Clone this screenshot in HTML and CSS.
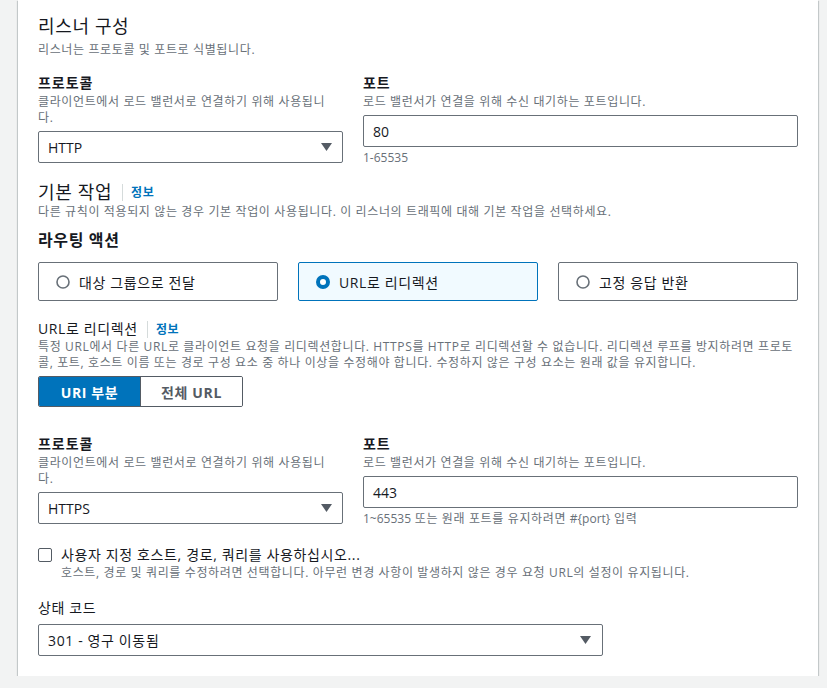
FILE: index.html
```html
<!DOCTYPE html>
<html lang="ko">
<head>
<meta charset="utf-8">
<title>리스너 구성</title>
<link rel="stylesheet" href="styles.css">
</head>
<body>
<div class="card">
  <h2 class="title">리스너 구성</h2>
  <p class="sub">리스너는 프로토콜 및 포트로 식별됩니다.</p>

  <div class="grid2 g1">
    <div class="field">
      <div class="label">프로토콜</div>
      <div class="desc">클라이언트에서 로드 밸런서로 연결하기 위해 사용됩니<br>다.</div>
      <div class="select">
        <span class="lt">HTTP</span>
        <svg class="caret" width="11" height="8" viewBox="0 0 11 8"><polygon points="0,0 11,0 5.5,8" fill="#545b64"/></svg>
      </div>
    </div>
    <div class="field">
      <div class="label">포트</div>
      <div class="desc">로드 밸런서가 연결을 위해 수신 대기하는 포트입니다.</div>
      <div class="input">80</div>
      <div class="hint"><span class="lt">1-65535</span></div>
    </div>
  </div>

  <div class="head-row">
    <h2 class="title">기본 작업</h2>
    <span class="info">정보</span>
  </div>
  <p class="sub tight">다른 규칙이 적용되지 않는 경우 기본 작업이 사용됩니다. 이 리스너의 트래픽에 대해 기본 작업을 선택하세요.</p>

  <h3 class="subhead">라우팅 액션</h3>
  <div class="tiles">
    <div class="tile">
      <svg class="radio" width="14" height="14" viewBox="0 0 14 14"><circle cx="7" cy="7" r="6" fill="#fff" stroke="#687078" stroke-width="1.6"/></svg>
      <span>대상 그룹으로 전달</span>
    </div>
    <div class="tile selected">
      <svg class="radio" width="14" height="14" viewBox="0 0 14 14"><circle cx="7" cy="7" r="5" fill="#fff" stroke="#0073bb" stroke-width="4"/></svg>
      <span>URL로 리디렉션</span>
    </div>
    <div class="tile">
      <svg class="radio" width="14" height="14" viewBox="0 0 14 14"><circle cx="7" cy="7" r="6" fill="#fff" stroke="#687078" stroke-width="1.6"/></svg>
      <span>고정 응답 반환</span>
    </div>
  </div>

  <div class="label-row">
    <span class="label plain">URL로 리디렉션</span>
    <span class="info">정보</span>
  </div>
  <div class="desc">특정 URL에서 다른 URL로 클라이언트 요청을 리디렉션합니다. HTTPS를 HTTP로 리디렉션할 수 없습니다. 리디렉션 루프를 방지하려면 프로토<br>콜, 포트, 호스트 이름 또는 경로 구성 요소 중 하나 이상을 수정해야 합니다. 수정하지 않은 구성 요소는 원래 값을 유지합니다.</div>
  <div class="segmented">
    <span class="seg active">URI 부분</span>
    <span class="seg">전체 URL</span>
  </div>

  <div class="grid2 g2">
    <div class="field">
      <div class="label">프로토콜</div>
      <div class="desc">클라이언트에서 로드 밸런서로 연결하기 위해 사용됩니<br>다.</div>
      <div class="select">
        <span class="lt">HTTPS</span>
        <svg class="caret" width="11" height="8" viewBox="0 0 11 8"><polygon points="0,0 11,0 5.5,8" fill="#545b64"/></svg>
      </div>
    </div>
    <div class="field">
      <div class="label">포트</div>
      <div class="desc">로드 밸런서가 연결을 위해 수신 대기하는 포트입니다.</div>
      <div class="input">443</div>
      <div class="hint"><span class="lt">1~65535</span> 또는 원래 포트를 유지하려면 <span class="lt">#{port}</span> 입력</div>
    </div>
  </div>

  <div class="check-row">
    <span class="checkbox"></span>
    <div>
      <div class="check-label">사용자 지정 호스트, 경로, 쿼리를 사용하십시오...</div>
      <div class="desc">호스트, 경로 및 쿼리를 수정하려면 선택합니다. 아무런 변경 사항이 발생하지 않은 경우 요청 URL의 설정이 유지됩니다.</div>
    </div>
  </div>

  <div class="field status">
    <div class="label plain">상태 코드</div>
    <div class="select wide">
      <span>301 - 영구 이동됨</span>
      <svg class="caret" width="11" height="8" viewBox="0 0 11 8"><polygon points="0,0 11,0 5.5,8" fill="#545b64"/></svg>
    </div>
  </div>
</div>
</body>
</html>
```

FILE: styles.css
```css
html, body {
  margin: 0;
  padding: 0;
  background: #f2f3f3;
  overflow: hidden;
}
body {
  font-family: "Open Sans", "Noto Sans CJK KR", sans-serif;
  letter-spacing: 0.045em;
  color: #16191f;
  font-size: 14px;
}
.lt { letter-spacing: 0; }
.card {
  margin-left: 18px;
  width: 800px;
  box-sizing: border-box;
  background: #fff;
  padding: 14px 20px 20px 20px;
  box-shadow: 0 1px 1px 0 rgba(0, 28, 36, 0.3), 1px 1px 1px 0 rgba(0, 28, 36, 0.15), -1px 1px 1px 0 rgba(0, 28, 36, 0.15);
}
.title {
  margin: 0;
  font-size: 18px;
  line-height: 24px;
  font-weight: 400;
  color: #16191f;
}
.sub {
  margin: 4px 0 0 0;
  font-size: 12px;
  line-height: 16px;
  color: #687078;
}
.sub.tight { margin-top: 0; }
.grid2 {
  display: grid;
  grid-template-columns: 305px 1fr;
  column-gap: 20px;
}
.g1 { margin-top: 14px; }
.g2 { margin-top: 26px; }
.label {
  font-size: 14px;
  line-height: 22px;
  font-weight: 700;
  letter-spacing: 0.07em;
  color: #16191f;
}
.label.plain { font-weight: 400; letter-spacing: 0.045em; }
.desc {
  font-size: 12px;
  line-height: 16px;
  color: #687078;
}
.select, .input {
  margin-top: 5px;
  height: 32px;
  box-sizing: border-box;
  border: 1px solid #687078;
  border-radius: 2px;
  padding: 0 10px 0 9px;
  display: flex;
  align-items: center;
  justify-content: space-between;
  font-size: 14px;
  color: #16191f;
  background: #fff;
}
.input { letter-spacing: 0; }
.select.wide { width: 565px; padding-right: 11px; }
.hint {
  margin-top: 3px;
  font-size: 12px;
  line-height: 16px;
  color: #687078;
}
.head-row {
  margin-top: 14px;
  display: flex;
  align-items: center;
}
.info {
  font-size: 12px;
  font-weight: 700;
  color: #0073bb;
  border-left: 1px solid #d5dbdb;
  padding-left: 8px;
  margin-left: 10px;
  line-height: 17px;
}
.subhead {
  margin: 9px 0 0 0;
  font-size: 16px;
  line-height: 22px;
  font-weight: 700;
}
.tiles {
  margin-top: 11px;
  display: grid;
  grid-template-columns: repeat(3, 1fr);
  column-gap: 20px;
}
.tile {
  height: 39px;
  box-sizing: border-box;
  border: 1px solid #687078;
  border-radius: 2px;
  display: flex;
  align-items: center;
  gap: 9px;
  padding-left: 17px;
  font-size: 14px;
}
.tile.selected {
  border-color: #0073bb;
  background: #f1faff;
}
.label-row {
  margin-top: 18px;
  display: flex;
  align-items: center;
  line-height: 20px;
}
.label-row .label { line-height: 20px; }
.label-row .info { margin-left: 9px; }
.segmented {
  margin-top: 5px;
  display: inline-flex;
  height: 31px;
  box-sizing: border-box;
  border: 1px solid #545b64;
  border-radius: 2px;
  overflow: hidden;
}
.seg {
  display: flex;
  align-items: center;
  justify-content: center;
  width: 101px;
  font-size: 14px;
  font-weight: 700;
  color: #545b64;
  background: #fff;
}
.seg.active {
  background: #0073bb;
  color: #fff;
  border-right: 1px solid #545b64;
}
.check-row {
  margin-top: 18px;
  display: flex;
  gap: 9px;
}
.checkbox {
  margin-top: 3px;
  width: 14px;
  height: 14px;
  box-sizing: border-box;
  border: 1px solid #545b64;
  border-radius: 2px;
  flex: none;
}
.check-label {
  font-size: 14px;
  line-height: 20px;
}
.status { margin-top: 16px; }
.caret { flex: none; }
```
